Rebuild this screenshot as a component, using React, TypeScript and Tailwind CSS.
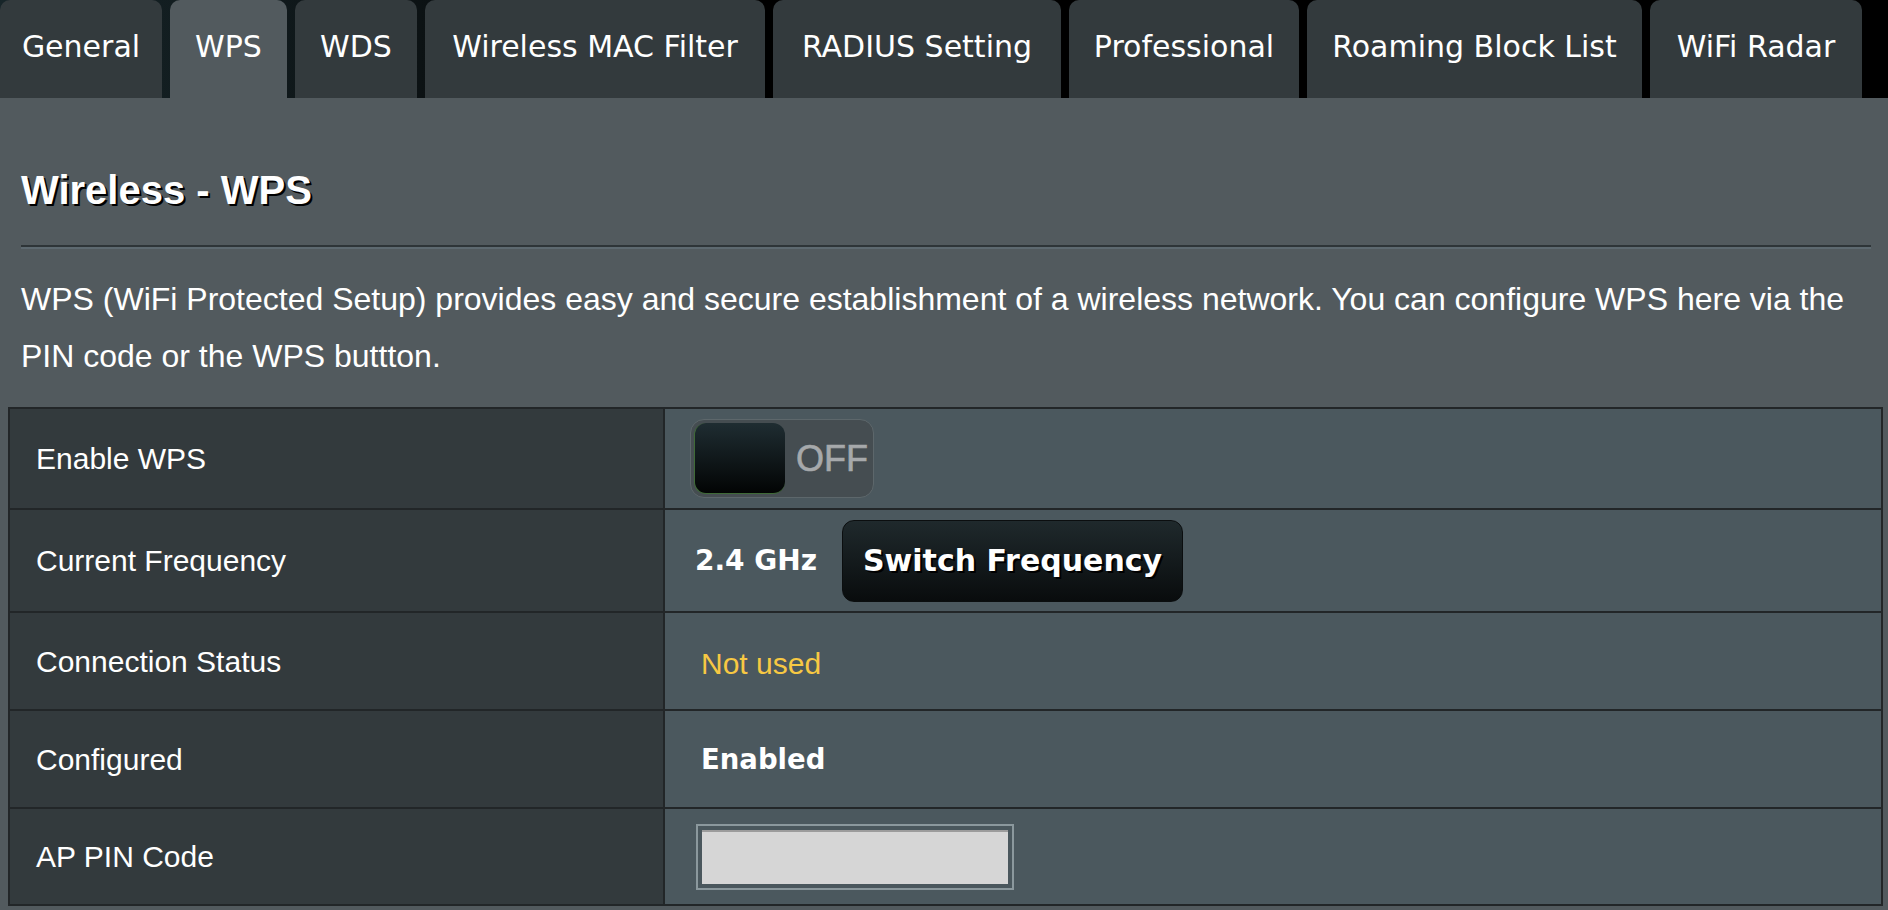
import React from 'react';

const tabs = [
  { name: 'General', w: 'w-[162px]' },
  { name: 'WPS', w: 'w-[117px]', active: true },
  { name: 'WDS', w: 'w-[122px]' },
  { name: 'Wireless MAC Filter', w: 'w-[340px]' },
  { name: 'RADIUS Setting', w: 'w-[288px]' },
  { name: 'Professional', w: 'w-[230px]' },
  { name: 'Roaming Block List', w: 'w-[335px]' },
  { name: 'WiFi Radar', w: 'w-[212px]' }
];

function TabBar() {
  return (
    <div className="flex h-[98px] gap-[8px] bg-[linear-gradient(90deg,#172529_0px,#0c1214_420px,#000_700px)]">
      {tabs.map((t) => (
        <div
          key={t.name}
          className={`${t.w} shrink-0 rounded-t-[10px] pt-[29px] text-center text-[30px] leading-[35px] text-white font-['DejaVu_Sans',sans-serif] ${
            t.active ? 'bg-[#525a5e]' : 'bg-[#333a3d]'
          }`}
        >
          {t.name}
        </div>
      ))}
    </div>
  );
}

function Toggle() {
  return (
    <div className="flex h-[79px] w-[184px] items-center rounded-[14px] border border-[#5d676b] bg-[#454d51] p-[3px]">
      <div className="h-[71px] w-[91px] rounded-[12px] border-l border-b border-[#3f6a37] bg-[linear-gradient(180deg,#1f2d32,#020404)]" />
      <span className="ml-[11px] text-[36px] leading-none text-[#a6a9ab] [-webkit-text-stroke:0.6px_#a6a9ab] font-['Liberation_Sans',Arial,sans-serif]">
        OFF
      </span>
    </div>
  );
}

function Row({
  label,
  h,
  last,
  children
}: {
  label: string;
  h: string;
  last?: boolean;
  children: React.ReactNode;
}) {
  return (
    <div className={`grid grid-cols-[655px_1fr] ${h} ${last ? '' : 'border-b-2 border-[#222628]'}`}>
      <div className="flex items-center border-r-2 border-[#222628] bg-[#333a3d] pl-[26px] text-[30px] text-white">
        {label}
      </div>
      <div className="flex items-center bg-[#4b585e]">{children}</div>
    </div>
  );
}

export default function App() {
  return (
    <div className="min-h-screen bg-[#525a5e] font-['Liberation_Sans',Arial,sans-serif]">
      <TabBar />
      <div className="px-[21px] pr-[17px] pt-[69px]">
        <h1 className="text-[40px] font-bold leading-[46px] text-white [text-shadow:2px_2px_0_#000]">
          Wireless - WPS
        </h1>
        <div className="mt-[32px] h-[4px] border-t-2 border-b-2 border-t-[#2e3538] border-b-[#5d6970]" />
        <p className="mt-[22px] text-[32px] leading-[57px] text-white">
          WPS (WiFi Protected Setup) provides easy and secure establishment of a wireless network. You can
          configure WPS here via the PIN code or the WPS buttton.
        </p>
      </div>
      <div className="ml-[8px] mr-[5px] mt-[22px] border-2 border-[#222628]">
        <Row label="Enable WPS" h="h-[101px]">
          <div className="ml-[25px]">
            <Toggle />
          </div>
        </Row>
        <Row label="Current Frequency" h="h-[103px]">
          <span className="ml-[30px] text-[28px] font-bold text-white font-['DejaVu_Sans',sans-serif]">2.4 GHz</span>
          <button className="ml-[25px] h-[82px] w-[341px] rounded-[12px] border border-[#0b0e0f] bg-[linear-gradient(180deg,#1f292c,#090c0d)] text-[30px] font-bold text-white font-['DejaVu_Sans',sans-serif] [text-shadow:2px_2px_0_#000]">
            Switch Frequency
          </button>
        </Row>
        <Row label="Connection Status" h="h-[98px]">
          <span className="ml-[36px] mt-[4px] text-[30px] text-[#f7c843]">Not used</span>
        </Row>
        <Row label="Configured" h="h-[98px]">
          <span className="ml-[36px] mt-[2px] text-[27.5px] font-bold text-white font-['DejaVu_Sans',sans-serif]">Enabled</span>
        </Row>
        <Row label="AP PIN Code" h="h-[95px]" last>
          <div className="ml-[31px] h-[66px] w-[318px] border-2 border-[#8b989d] bg-[#4a575d] p-[4px]">
            <input
              className="h-full w-full border-t-2 border-[#9c9c9c] bg-[#d6d6d6] outline-none"
              defaultValue=""
            />
          </div>
        </Row>
      </div>
    </div>
  );
}
